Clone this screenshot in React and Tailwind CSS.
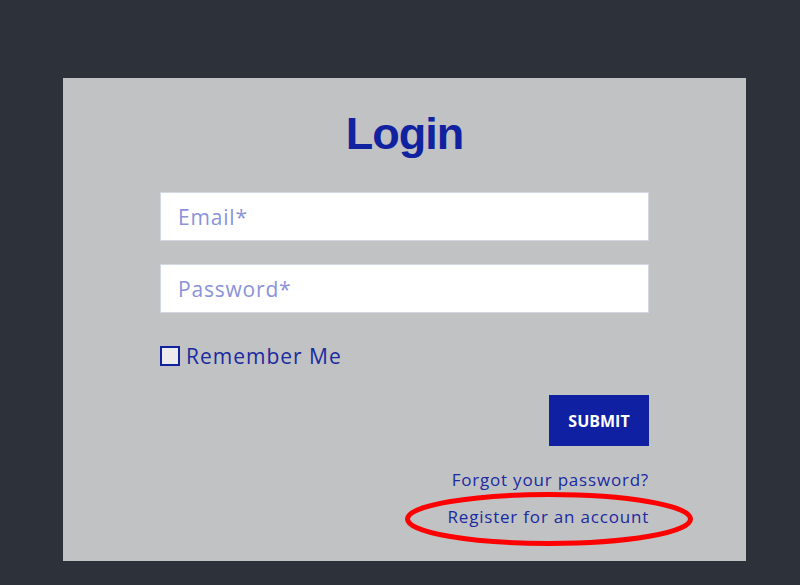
export default function App() {
  return (
    <div className="min-h-[585px] w-full bg-[#2d3139] pt-[78px] pb-[24px]" style={{ fontFamily: '"Open Sans", "Liberation Sans", sans-serif' }}>
      <div className="ml-[63px] w-[683px] bg-[#c1c2c4] pt-[32px] pb-[32px]">
        <h1 className="text-center text-[45px] leading-[48px] font-black tracking-[-1px] text-[#1122a0]" style={{ fontFamily: '"Liberation Sans", Arial, sans-serif' }}>
          Login
        </h1>
        <div className="mx-auto mt-[34px] flex w-[489px] flex-col">
          <input
            type="text"
            placeholder="Email*"
            className="h-[49px] w-full border border-[#d3d7e3] bg-white px-[17px] text-[21px] font-medium tracking-[0.8px] text-[#1a2aa0] placeholder:text-[#8a93d8] outline-none"
          />
          <input
            type="password"
            placeholder="Password*"
            className="mt-[23px] h-[49px] w-full border border-[#d3d7e3] bg-white px-[17px] text-[21px] font-medium tracking-[0.8px] text-[#1a2aa0] placeholder:text-[#8a93d8] outline-none"
          />
          <label className="mt-[33px] flex h-[20px] items-center gap-[6px]">
            <span className="h-[20px] w-[20px] border-2 border-[#1122a0] bg-[#ececec]" />
            <span className="text-[21px] leading-[24px] tracking-[1px] text-[#1a2aa0]">Remember Me</span>
          </label>
          <div className="mt-[29px] flex justify-end">
            <button className="h-[51px] w-[100px] bg-[#1020a2] text-[16px] font-bold text-white">SUBMIT</button>
          </div>
          <div className="mt-[22px] flex flex-col items-end text-[17px] leading-[24px] tracking-[0.8px] text-[#1a2aa0]">
            <a className="block">Forgot your password?</a>
            <div className="relative mt-[13px]">
              <a className="block">Register for an account</a>
              <svg className="pointer-events-none absolute right-[-46px] top-[-13px]" width="292" height="54" viewBox="0 0 292 54">
                <ellipse cx="146" cy="27" rx="141.5" ry="24.5" fill="none" stroke="#ff0000" strokeWidth="5" />
              </svg>
            </div>
          </div>
        </div>
      </div>
    </div>
  );
}
